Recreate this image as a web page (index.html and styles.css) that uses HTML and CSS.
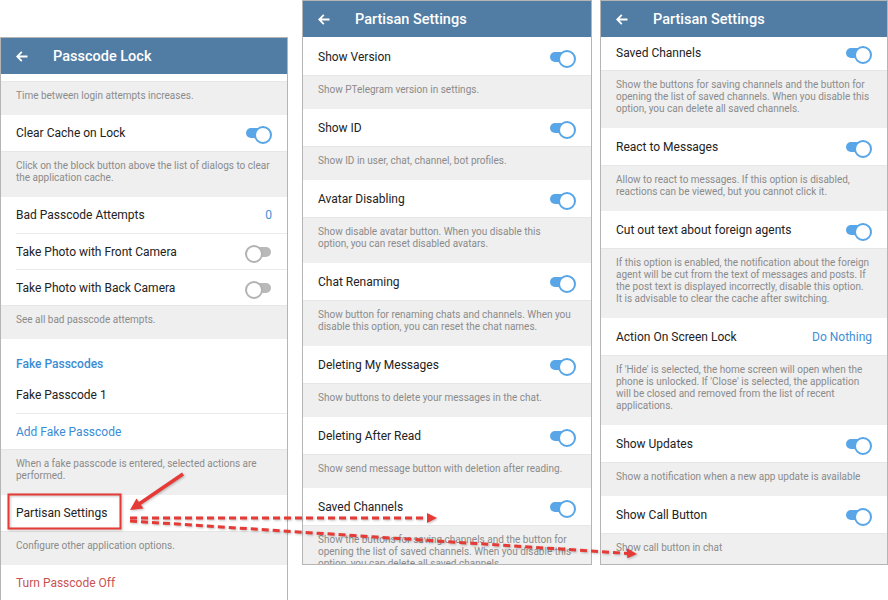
FILE: index.html
```html
<!DOCTYPE html>
<html lang="en">
<head>
<meta charset="utf-8">
<title>Partisan Settings</title>
<link rel="stylesheet" href="styles.css">
</head>
<body>
<div class="stage">
  <section class="screen screen--lock">
    <header class="bar">
      <svg class="back" viewBox="0 0 12 11"><path d="M11.5 5.5H1.2M5.8 0.9L1.2 5.5l4.6 4.6" fill="none" stroke="#fff" stroke-width="1.8"/></svg>
      <h1>Passcode Lock</h1>
    </header>
    <div class="gap"></div>
    <p class="note">Time between login attempts increases.</p>
    <div class="row"><span>Clear Cache on Lock</span><span class="switch"></span></div>
    <p class="note">Click on the block button above the list of dialogs to clear<br>the application cache.</p>
    <div class="row"><span>Bad Passcode Attempts</span><span class="value">0</span></div>
    <div class="row row--inset"><span>Take Photo with Front Camera</span><span class="switch switch--off"></span></div>
    <div class="row row--inset"><span>Take Photo with Back Camera</span><span class="switch switch--off"></span></div>
    <p class="note">See all bad passcode attempts.</p>
    <div class="section-title">Fake Passcodes</div>
    <div class="row"><span>Fake Passcode 1</span></div>
    <div class="row row--inset row--link"><span>Add Fake Passcode</span></div>
    <p class="note">When a fake passcode is entered, selected actions are<br>performed.</p>
    <div class="row"><span>Partisan Settings</span></div>
    <p class="note">Configure other application options.</p>
    <div class="row row--danger"><span>Turn Passcode Off</span></div>
  </section>

  <section class="screen screen--partisan">
    <header class="bar">
      <svg class="back" viewBox="0 0 12 11"><path d="M11.5 5.5H1.2M5.8 0.9L1.2 5.5l4.6 4.6" fill="none" stroke="#fff" stroke-width="1.8"/></svg>
      <h1>Partisan Settings</h1>
    </header>
    <div class="row row--first"><span>Show Version</span><span class="switch"></span></div>
    <p class="note">Show PTelegram version in settings.</p>
    <div class="row"><span>Show ID</span><span class="switch"></span></div>
    <p class="note">Show ID in user, chat, channel, bot profiles.</p>
    <div class="row"><span>Avatar Disabling</span><span class="switch"></span></div>
    <p class="note">Show disable avatar button. When you disable this<br>option, you can reset disabled avatars.</p>
    <div class="row"><span>Chat Renaming</span><span class="switch"></span></div>
    <p class="note">Show button for renaming chats and channels. When you<br>disable this option, you can reset the chat names.</p>
    <div class="row"><span>Deleting My Messages</span><span class="switch"></span></div>
    <p class="note">Show buttons to delete your messages in the chat.</p>
    <div class="row"><span>Deleting After Read</span><span class="switch"></span></div>
    <p class="note">Show send message button with deletion after reading.</p>
    <div class="row"><span>Saved Channels</span><span class="switch"></span></div>
    <p class="note">Show the buttons for saving channels and the button for<br>opening the list of saved channels. When you disable this<br>option, you can delete all saved channels.</p>
  </section>

  <section class="screen screen--scrolled">
    <header class="bar">
      <svg class="back" viewBox="0 0 12 11"><path d="M11.5 5.5H1.2M5.8 0.9L1.2 5.5l4.6 4.6" fill="none" stroke="#fff" stroke-width="1.8"/></svg>
      <h1>Partisan Settings</h1>
    </header>
    <div class="row row--cut"><span>Saved Channels</span><span class="switch"></span></div>
    <p class="note">Show the buttons for saving channels and the button for<br>opening the list of saved channels. When you disable this<br>option, you can delete all saved channels.</p>
    <div class="row"><span>React to Messages</span><span class="switch"></span></div>
    <p class="note">Allow to react to messages. If this option is disabled,<br>reactions can be viewed, but you cannot click it.</p>
    <div class="row"><span>Cut out text about foreign agents</span><span class="switch"></span></div>
    <p class="note">If this option is enabled, the notification about the foreign<br>agent will be cut from the text of messages and posts. If<br>the post text is displayed incorrectly, disable this option.<br>It is advisable to clear the cache after switching.</p>
    <div class="row"><span>Action On Screen Lock</span><span class="value">Do Nothing</span></div>
    <p class="note">If 'Hide' is selected, the home screen will open when the<br>phone is unlocked. If 'Close' is selected, the application<br>will be closed and removed from the list of recent<br>applications.</p>
    <div class="row"><span>Show Updates</span><span class="switch"></span></div>
    <p class="note">Show a notification when a new app update is available</p>
    <div class="row"><span>Show Call Button</span><span class="switch"></span></div>
    <p class="note">Show call button in chat</p>
  </section>

  <svg class="annotations" viewBox="0 0 888 600">
    <rect x="8.5" y="494.5" width="112" height="34" fill="none" stroke="#e53a35" stroke-width="2"/>
    <line x1="183" y1="474" x2="139" y2="504" stroke="#e53a35" stroke-width="3.5"/>
    <polygon points="130,510 143.5,508.5 136.5,498.5" fill="#e53a35"/>
    <line x1="130" y1="518" x2="428" y2="518" stroke="#e53a35" stroke-width="3" stroke-dasharray="7 4"/>
    <polygon points="427,513 437,518 427,523" fill="#e53a35"/>
    <line x1="130" y1="521" x2="628" y2="553.4" stroke="#e53a35" stroke-width="3" stroke-dasharray="7 4"/>
    <polygon points="626.7,548.3 637,554 627.3,558.3" fill="#e53a35"/>
  </svg>
</div>
</body>
</html>
```

FILE: styles.css
```css
* {
  box-sizing: border-box;
}

body {
  margin: 0;
  background: #fff;
  font-family: Roboto, "Noto Sans", "Liberation Sans", sans-serif;
}

.stage {
  position: relative;
  width: 888px;
  height: 600px;
  overflow: hidden;
  display: flex;
  align-items: flex-start;
}

.screen {
  display: flex;
  flex-direction: column;
  background: #fff;
  border: 1px solid #b5b5b5;
  overflow: hidden;
  flex-shrink: 0;
}

.screen--lock {
  width: 288px;
  height: 590px;
  margin-top: 37px;
}

.screen--partisan {
  width: 290px;
  height: 565px;
  margin-left: 14px;
}

.screen--scrolled {
  width: 288px;
  height: 565px;
  margin-left: 8px;
}

.bar {
  flex-shrink: 0;
  height: 36px;
  display: flex;
  align-items: center;
  padding-left: 15px;
  background: #517ca3;
  color: #fff;
}

.back {
  width: 12px;
  height: 11px;
  margin-right: 25px;
}

.bar h1 {
  margin: 0;
  font-size: 14.5px;
  font-weight: 500;
}

.gap {
  flex-shrink: 0;
  height: 7px;
  background: #fff;
}

.row {
  flex-shrink: 0;
  height: 37px;
  display: flex;
  align-items: center;
  justify-content: space-between;
  padding: 0 15px;
  background: #fff;
  font-size: 12px;
  color: #222;
}

.screen--lock .row {
  height: 36px;
}

.row--first {
  height: 38px;
  padding-top: 2px;
}

.row--inset {
  margin-left: 15px;
  padding-left: 0;
  border-top: 1px solid #ebebeb;
}

.row--cut {
  height: 33px;
  padding-bottom: 2px;
}

.row--link {
  color: #3a8cd5;
}

.row--danger {
  color: #c9534f;
}

.value {
  color: #3e8fd6;
}

.note {
  flex-shrink: 0;
  margin: 0;
  padding: 8px 15px 13px;
  background: #efefef;
  border-top: 1px solid #e6e6e6;
  font-size: 10px;
  line-height: 12px;
  color: #8b8b8b;
  white-space: nowrap;
}

.section-title {
  flex-shrink: 0;
  height: 38px;
  padding: 17px 15px 0;
  font-size: 12px;
  line-height: 16px;
  font-weight: 500;
  color: #3a8cd5;
}

.switch {
  position: relative;
  width: 27px;
  height: 14px;
  flex-shrink: 0;
}

.switch::before {
  content: "";
  position: absolute;
  left: 1px;
  right: 1px;
  top: 2px;
  height: 10px;
  border-radius: 5px;
  background: #58a6e7;
}

.switch::after {
  content: "";
  position: absolute;
  right: 0;
  top: 0;
  width: 14px;
  height: 14px;
  border-radius: 50%;
  background: #fff;
  border: 2px solid #58a6e7;
}

.switch--off::before {
  background: #b9b9b9;
}

.switch--off::after {
  left: 0;
  right: auto;
  border-color: #b3b3b3;
}

.annotations {
  position: absolute;
  left: 0;
  top: 0;
  width: 888px;
  height: 600px;
  pointer-events: none;
  filter: drop-shadow(1px 1px 1px rgba(0, 0, 0, 0.25));
}
```
